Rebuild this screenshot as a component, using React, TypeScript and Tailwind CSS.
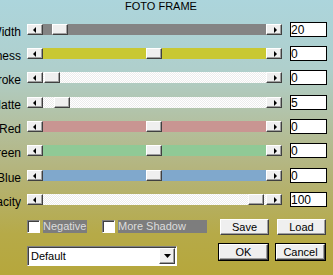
import React from 'react';

type SliderRow = {
  label: string;
  value: string;
  track: string;
  thumb: number;
};

const rows: SliderRow[] = [
  { label: 'Width', value: '20', track: 'bg-[#848484]', thumb: 9 },
  { label: 'Thickness', value: '0', track: 'bg-[#c9c832]', thumb: 103 },
  { label: 'Stroke', value: '0', track: 'dither', thumb: 1 },
  { label: 'Matte', value: '5', track: 'dither', thumb: 11 },
  { label: 'Red', value: '0', track: 'bg-[#c99592]', thumb: 103 },
  { label: 'Green', value: '0', track: 'bg-[#90c996]', thumb: 103 },
  { label: 'Blue', value: '0', track: 'bg-[#80a8cc]', thumb: 103 },
  { label: 'Opacity', value: '100', track: 'dither', thumb: 205 },
];

const raised =
  'border border-t-white border-l-white border-r-[#404040] border-b-[#404040] bg-[#efefef] shadow-[inset_-1px_-1px_0_#a0a0a0]';

function ArrowButton({ dir }: { dir: 'left' | 'right' }) {
  return (
    <div className={`flex h-[11px] w-4 shrink-0 items-center justify-center ${raised}`}>
      <svg width="4" height="6" viewBox="0 0 4 6" className={dir === 'left' ? '-ml-px' : 'ml-px'}>
        {dir === 'left' ? <path d="M3 0 L0 3 L3 6 Z" fill="#000" /> : <path d="M1 0 L4 3 L1 6 Z" fill="#000" />}
      </svg>
    </div>
  );
}

function Slider({ row }: { row: SliderRow }) {
  const trackClass =
    row.track === 'dither'
      ? 'bg-[repeating-conic-gradient(#ffffff_0_25%,#ececec_0_50%)] bg-[length:2px_2px]'
      : row.track;
  return (
    <div className="ml-[6px] mt-[7px] flex h-[11px] w-[255px]">
      <ArrowButton dir="left" />
      <div className={`relative h-[11px] flex-1 ${trackClass}`}>
        <div className={`absolute top-0 h-[11px] w-4 ${raised}`} style={{ left: row.thumb }} />
      </div>
      <ArrowButton dir="right" />
    </div>
  );
}

function Checkbox({ label, width }: { label: string; width: string }) {
  return (
    <div className="flex items-start">
      <div className="mt-px h-[13px] w-[13px] border border-t-[#808080] border-l-[#808080] border-r-white border-b-white bg-white shadow-[inset_1px_1px_0_#404040]" />
      <div className={`ml-[3px] mt-px h-[13px] bg-[#7d7d7d] text-[11px] leading-[13px] text-[#dcdcdc] ${width}`}>{label}</div>
    </div>
  );
}

function Button({ label, main }: { label: string; main?: boolean }) {
  if (main) {
    return (
      <div className="h-[18px] w-[51px] border border-black">
        <div className={`flex h-full w-full items-center justify-center text-[11px] leading-none ${raised}`}>{label}</div>
      </div>
    );
  }
  return (
    <div className={`flex h-4 w-[49px] items-center justify-center text-[11px] leading-none ${raised}`}>{label}</div>
  );
}

export default function App() {
  return (
    <div
      className="relative h-[275px] w-[333px] overflow-hidden bg-[linear-gradient(180deg,#acd5dc_0%,#afcfcc_25%,#b3c0a0_45%,#b4b47c_62%,#b6aa48_85%,#b6a73c_100%)] text-black"
      style={{ fontFamily: '"Liberation Sans", Arial, sans-serif' }}
    >
      <div className="h-[17px] pl-[125px] text-[11px] leading-[13px]">FOTO FRAME</div>

      <div className="flex flex-col">
        {rows.map((row, i) => (
          <div key={row.label} className={`flex h-6 items-start ${i === 3 || i === 6 ? 'mt-px' : ''}`}>
            <div className="mt-[8px] flex w-[21px] justify-end overflow-hidden whitespace-nowrap text-[12px] leading-[14px]">
              <span className="shrink-0">{row.label}</span>
            </div>
            <Slider row={row} />
            <div className="ml-[8px] mt-[5px] h-[15px] w-[37px] border border-black bg-white pt-px text-[12px] leading-[13px]">
              {row.value}
            </div>
          </div>
        ))}
      </div>

      <div className="mt-[8px] flex items-start pl-[27px]">
        <Checkbox label="Negative" width="w-[44px]" />
        <div className="ml-[15px]">
          <Checkbox label="More Shadow" width="w-[89px]" />
        </div>
        <div className="ml-[13px]">
          <Button label="Save" />
        </div>
        <div className="ml-[8px]">
          <Button label="Load" />
        </div>
      </div>

      <div className="mt-[8px] flex items-start pl-[27px]">
        <div className="mt-[3px] flex h-5 w-[150px] items-center border border-t-[#808080] border-l-[#808080] border-r-white border-b-white bg-white shadow-[inset_1px_1px_0_#404040]">
          <span className="flex-1 pl-[3px] text-[11px] leading-none">Default</span>
          <div className={`mr-px flex h-4 w-4 items-center justify-center ${raised}`}>
            <svg width="7" height="4" viewBox="0 0 7 4">
              <path d="M0 0 L7 0 L3.5 4 Z" fill="#000" />
            </svg>
          </div>
        </div>
        <div className="ml-[41px]">
          <Button label="OK" main />
        </div>
        <div className="ml-[6px]">
          <Button label="Cancel" main />
        </div>
      </div>
    </div>
  );
}
